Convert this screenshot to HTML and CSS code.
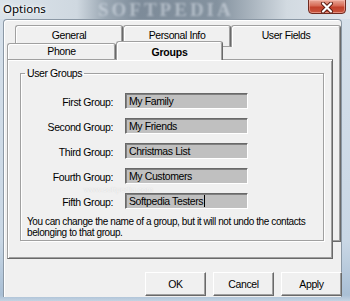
FILE: index.html
```html
<!DOCTYPE html>
<html>
<head>
<meta charset="utf-8">
<link rel="stylesheet" href="styles.css">
</head>
<body>
<div class="window">
  <div class="titlebar">
    <span class="title">Options</span>
    <span class="wm">SOFTPEDIA</span>
    <div class="close">
      <svg width="14" height="11" viewBox="0 0 14 11"><path d="M3 1.5 L11 9.5 M11 1.5 L3 9.5" stroke="#5a1a10" stroke-width="4" stroke-linecap="round"/><path d="M3 1.5 L11 9.5 M11 1.5 L3 9.5" stroke="#fff" stroke-width="2.2" stroke-linecap="round"/></svg>
    </div>
  </div>
  <div class="client">
    <div class="tabctl">
      <div class="back">
        <div class="tabrow">
          <div class="tab t-general">General</div>
          <div class="tab t-personal">Personal Info</div>
          <div class="tab t-user">User Fields</div>
        </div>
        <div class="backpage"></div>
      </div>
      <div class="front">
        <div class="tabrow row2">
          <div class="tab t-phone">Phone</div>
          <div class="tab t-groups">Groups</div>
        </div>
        <div class="page">
          <fieldset class="groupbox">
            <legend>User Groups</legend>
            <div class="fields">
              <label class="lbl">First Group:</label><div class="inp">My Family</div>
              <label class="lbl">Second Group:</label><div class="inp">My Friends</div>
              <label class="lbl">Third Group:</label><div class="inp">Christmas List</div>
              <label class="lbl">Fourth Group:</label><div class="inp">My Customers</div>
              <label class="lbl">Fifth Group:</label><div class="inp">Softpedia Testers<span class="caret"></span></div>
            </div>
            <p class="note">You can change the name of a group, but it will not undo the contacts belonging to that group.</p>
          </fieldset>
          <div class="wm3">www.softpedia.com</div>
        </div>
      </div>
    </div>
    <div class="buttons">
      <div class="btn">OK</div>
      <div class="btn">Cancel</div>
      <div class="btn">Apply</div>
    </div>
  </div>
</div>
</body>
</html>
```
FILE: styles.css
```css
* { box-sizing: border-box; }
html, body { margin: 0; padding: 0; }
body {
  width: 350px; height: 301px; overflow: hidden;
  font-family: "Liberation Sans", Arial, sans-serif;
  font-size: 10px; letter-spacing: -0.4px; color: #000;
}
.window {
  width: 350px; height: 301px;
  background: linear-gradient(#d6e0ea, #c9d7e5 80%, #a9bfd5 98%, #c4d3e2);
  display: flex; flex-direction: column;
}
.titlebar {
  height: 19px; position: relative; overflow: hidden;
  background: linear-gradient(90deg, #dbe3ea 0, #cfd8e0 22%, #9aa7b3 30%, #7d8b99 40%, #84929f 62%, #aab5bf 72%, #d2dae1 82%, #e0e6ec 100%);
  display: flex; align-items: flex-start;
}
.title {
  font-family: "Noto Sans", "Open Sans", sans-serif; font-size: 11.5px; letter-spacing: 0;
  margin: 1px 0 0 3px; color: #000;
  text-shadow: 0 0 6px #fff, 0 0 3px #fff;
  position: relative; z-index: 2;
}
.wm {
  position: absolute; left: 98px; top: 0px;
  font-family: "Liberation Serif", serif; font-weight: bold; font-size: 19px; line-height: 19px; letter-spacing: 3px;
  color: rgba(225,232,240,0.5); filter: blur(0.8px);
}
.close {
  position: absolute; left: 308px; top: -1px; width: 38px; height: 15px;
  border: 1px solid #6e2a20; border-radius: 0 0 4px 4px;
  background: linear-gradient(#e9a999, #d66a55 45%, #c2412b 55%, #c8563f);
  box-shadow: inset 0 0 0 1px rgba(255,200,190,0.5);
  display: flex; align-items: center; justify-content: center;
}
.close svg { margin-top: 1px; }
.client {
  margin-left: 3px; width: 339px; height: 278px;
  background: #f0f0f0;
  border: 1px solid #8b98a5; border-bottom: none;
  border-radius: 4px 4px 0 0;
  box-shadow: inset 1px 1px 0 #fff;
  padding: 5px 0 0 3px;
  display: flex; flex-direction: column;
}
.tabctl { display: grid; width: 334px; height: 234px; }
.back, .front { grid-area: 1 / 1; display: flex; flex-direction: column; }
.back { margin-left: 8px; width: 326px; }
.front { margin-top: 16px; width: 326px; }
.tabrow { display: flex; align-items: flex-end; }
.back .tabrow { height: 22px; }
.tab {
  height: 22px;
  border: 1px solid #a0a0a0; border-bottom: none;
  border-right-color: #696969;
  border-radius: 3px 3px 0 0;
  box-shadow: inset 1px 1px 0 #fff, inset -1px 0 0 #a0a0a0;
  background: #f0f0f0;
  display: flex; justify-content: center; padding-top: 3px;
  line-height: 13px; font-size: 10.5px;
}
.t-general, .t-personal { width: 108px; border-bottom: 1px solid #a0a0a0; }
.t-user { width: 110px; }
.backpage {
  height: 195px; width: 326px;
  border-right: 1px solid #696969; border-bottom: 1px solid #696969;
  box-shadow: inset -1px -1px 0 #a0a0a0;
}
.row2 { height: 18px; position: relative; z-index: 1; }
.t-phone { width: 109px; height: 16px; padding-top: 1px; }
.t-groups { width: 107px; height: 19px; margin-bottom: -1px; font-weight: bold; padding-top: 4px; letter-spacing: -0.2px; }
.page {
  position: relative;
  height: 200px; width: 326px;
  border: 1px solid #a0a0a0;
  border-right-color: #696969; border-bottom-color: #696969;
  box-shadow: inset 1px 1px 0 #fff, inset -1px -1px 0 #a0a0a0;
  background: #f0f0f0;
  padding: 7px 0 0 12px;
}
.groupbox {
  margin: 0; padding: 0; width: 304px; height: 174px;
  border: 1px solid #a0a0a0;
  box-shadow: inset 1px 1px 0 #fff, 1px 1px 0 #fff;
  min-width: 0;
}
.groupbox legend { margin-left: 4px; padding: 0 2px; line-height: 13px; font-size: 10.5px; }
.fields {
  display: grid; grid-template-columns: 92px 123px; grid-auto-rows: 16px;
  column-gap: 12px; row-gap: 9px; margin-top: 13px;
}
.lbl { text-align: right; padding-top: 3px; line-height: 13px; white-space: nowrap; font-size: 10.5px; }
.inp {
  background: #c0c0c0;
  border-top: 1px solid #696969; border-left: 1px solid #696969;
  border-right: 1px solid #fff; border-bottom: 1px solid #fff;
  box-shadow: inset 1px 1px 0 #808080;
  padding: 1px 0 0 3px; line-height: 13px; white-space: nowrap; overflow: hidden; font-size: 10.5px;
}
.caret { display: inline-block; width: 1px; height: 12px; background: #000; vertical-align: -2px; margin-left: 1px; }
.note { margin: 7px 0 0 6px; line-height: 11px; width: 296px; }
.wm3 {
  position: absolute; left: 76px; top: 125px; font-size: 8px; letter-spacing: 0;
  color: rgba(255,255,255,0.75); text-shadow: 0 0 1px rgba(150,150,150,0.4);
}
.buttons { display: flex; justify-content: flex-end; gap: 7px; margin-top: 13px; width: 335px; }
.btn {
  width: 61px; height: 24px; font-size: 10.5px;
  border: 1px solid #fff; border-right-color: #696969; border-bottom-color: #696969;
  box-shadow: inset -1px -1px 0 #a0a0a0;
  display: flex; align-items: center; justify-content: center;
  background: #f0f0f0;
}
```
